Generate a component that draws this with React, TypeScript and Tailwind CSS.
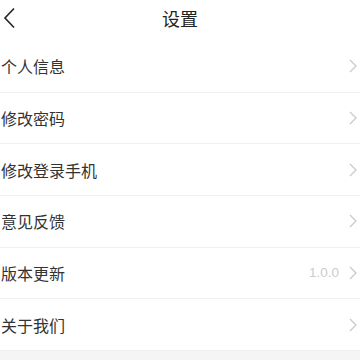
import React from "react";

const items: { label: string; value?: string }[] = [
  { label: "个人信息" },
  { label: "修改密码" },
  { label: "修改登录手机" },
  { label: "意见反馈" },
  { label: "版本更新", value: "1.0.0" },
  { label: "关于我们" },
];

function Chevron() {
  return (
    <svg width="8" height="14" viewBox="0 0 8 14" fill="none">
      <path d="M1 1l6 6-6 6" stroke="#c8c8c8" strokeWidth="1.2" />
    </svg>
  );
}

export default function App() {
  return (
    <div
      className="w-[360px] h-[360px] bg-[#f5f5f5] overflow-hidden"
      style={{ fontFamily: '"Noto Sans CJK SC", "Noto Sans", sans-serif' }}
    >
      <div className="bg-white">
        <div className="relative h-[41px] flex items-center justify-center">
          <svg
            className="absolute left-[3px] top-[7px]"
            width="13"
            height="22"
            viewBox="0 0 13 22"
            fill="none"
          >
            <path d="M11 1.5L2 11l9 9.5" stroke="#222" strokeWidth="1.6" />
          </svg>
          <span className="text-[18px] text-[#222] leading-none mt-[-6px]">设置</span>
        </div>
        {items.map((it) => (
          <div
            key={it.label}
            className="h-[51.67px] flex items-center border-b-[1.5px] border-[#f0f0f0] pl-[1px] pr-[3px]"
          >
            <span className="flex-1 text-[16px] text-[#333] leading-none">{it.label}</span>
            {it.value && (
              <span
                className="text-[13.5px] text-[#cccccc] mr-[10px] leading-none"
                style={{ fontFamily: '"Liberation Sans", sans-serif' }}
              >
                {it.value}
              </span>
            )}
            <Chevron />
          </div>
        ))}
      </div>
    </div>
  );
}
